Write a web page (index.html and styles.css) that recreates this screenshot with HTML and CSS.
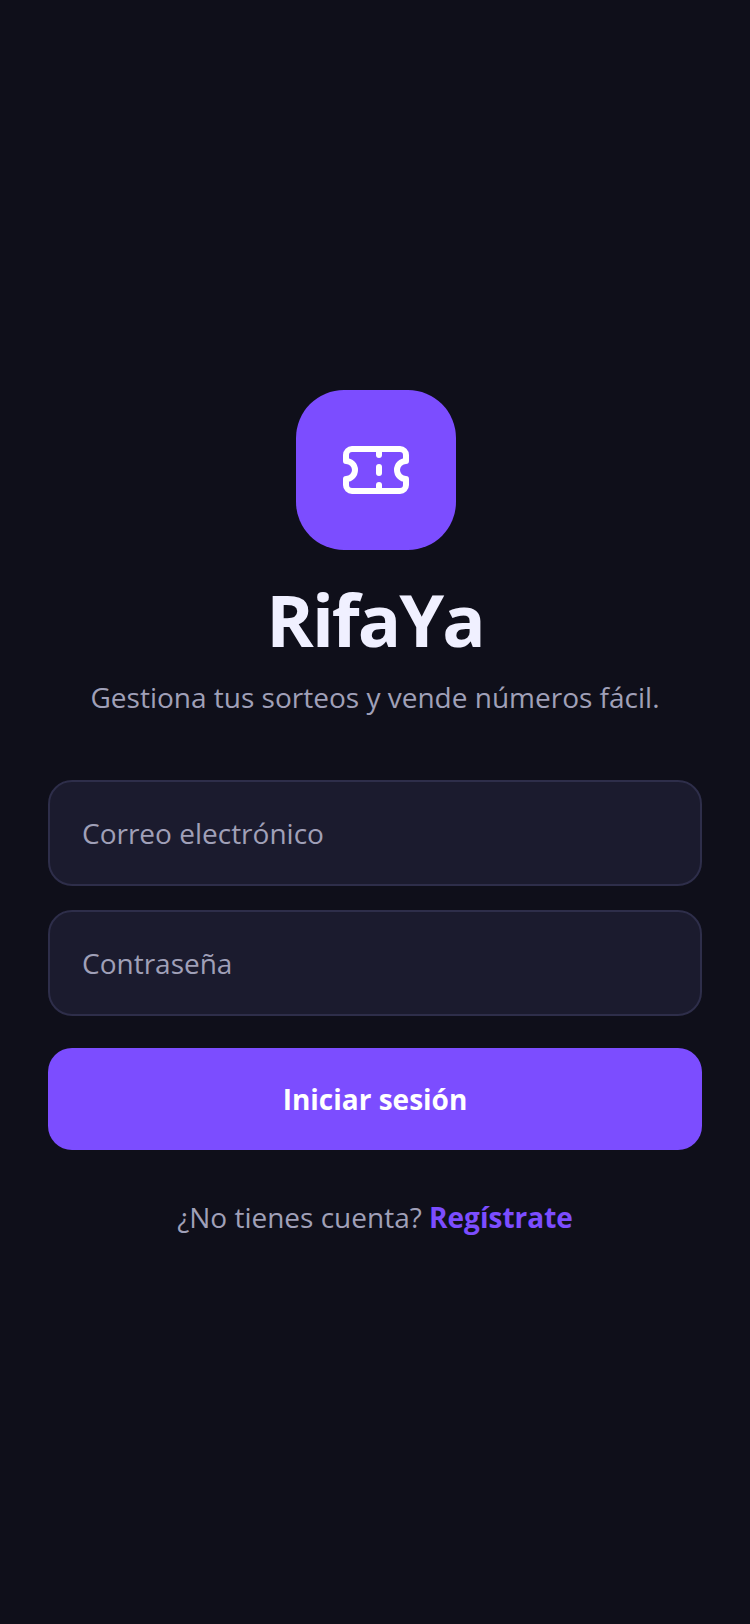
FILE: index.html
```html
<!DOCTYPE html>
<html lang="es">
<head>
  <meta charset="utf-8" />
  <title>RifaYa</title>
  <link rel="stylesheet" href="styles.css">
</head>
<body>

  <main class="login">
    <div class="logo">
      <svg class="logo-icon" viewBox="0 0 24 24" fill="none" stroke="#fff" stroke-width="2" stroke-linecap="round" stroke-linejoin="round">
        <path d="M2 9a3 3 0 0 1 0 6v2a2 2 0 0 0 2 2h16a2 2 0 0 0 2-2v-2a3 3 0 0 1 0-6V7a2 2 0 0 0-2-2H4a2 2 0 0 0-2 2Z" />
        <path d="M13 5v2" />
        <path d="M13 17v2" />
        <path d="M13 11v2" />
      </svg>
    </div>

    <h1 class="title">RifaYa</h1>
    <p class="subtitle">Gestiona tus sorteos y vende números fácil.</p>

    <form class="form">
      <input class="field" type="email" placeholder="Correo electrónico">
      <input class="field" type="password" placeholder="Contraseña">
      <button class="submit" type="button">Iniciar sesión</button>
    </form>

    <p class="signup">¿No tienes cuenta? <a href="#">Regístrate</a></p>
  </main>

</body>
</html>
```

FILE: styles.css
```css
* {
  box-sizing: border-box;
}

body {
  margin: 0;
  min-height: 1624px;
  background-color: #0f0f1a;
  font-family: "Open Sans", sans-serif;
  display: flex;
  align-items: center;
  justify-content: center;
}

.login {
  width: 100%;
  padding: 2px 48px 0;
  display: flex;
  flex-direction: column;
  align-items: center;
}

.logo {
  width: 160px;
  height: 160px;
  margin-left: 2px;
  border-radius: 48px;
  background-color: #7c4dff;
  display: flex;
  align-items: center;
  justify-content: center;
}

.logo-icon {
  width: 72px;
  height: 72px;
}

.title {
  margin: 20px 0 0;
  font-size: 72px;
  line-height: 98px;
  font-weight: 700;
  letter-spacing: -2px;
  color: #f0f0ff;
}

.subtitle {
  margin: 10px 0 0;
  font-size: 28px;
  line-height: 38px;
  color: #a0a0b8;
}

.form {
  width: 100%;
  margin-top: 64px;
  display: flex;
  flex-direction: column;
}

.field {
  width: 100%;
  height: 106px;
  margin-bottom: 24px;
  padding: 0 32px;
  border: 2px solid #2e2e4a;
  border-radius: 24px;
  background-color: #1b1b2e;
  font-family: inherit;
  font-size: 28px;
  color: #f0f0ff;
  outline: none;
}

.field::placeholder {
  color: #a0a0b8;
  opacity: 1;
}

.submit {
  height: 102px;
  margin-top: 8px;
  border: 0;
  border-radius: 24px;
  background-color: #7c4dff;
  font-family: inherit;
  font-size: 28px;
  font-weight: 700;
  color: #fff;
}

.signup {
  margin: 48px 0 0;
  font-size: 28px;
  line-height: 38px;
  color: #a0a0b8;
}

.signup a {
  font-weight: 700;
  color: #7c4dff;
  text-decoration: none;
}
```
